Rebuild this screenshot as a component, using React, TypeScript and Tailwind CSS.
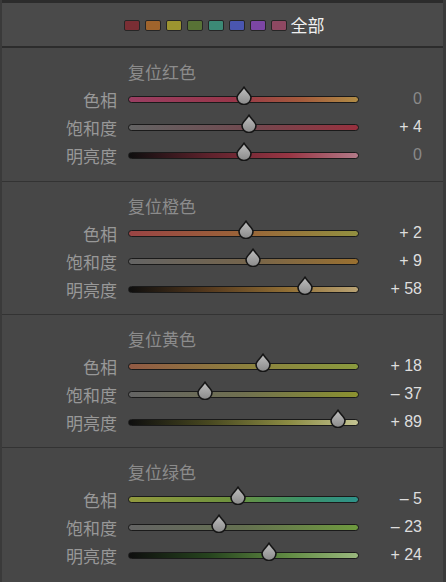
import React from "react";

type Row = { label: string; grad: string; pos: number; value: string; zero?: boolean };
type Section = { title: string; rows: Row[] };

const sections: Section[] = [
  {
    title: "复位红色",
    rows: [
      { label: "色相", grad: "linear-gradient(90deg,#9a3e62 0%,#98364a 45%,#a45a3c 75%,#b08c46 100%)", pos: 115, value: "0", zero: true },
      { label: "饱和度", grad: "linear-gradient(90deg,#646464 0%,#704a50 50%,#98303e 100%)", pos: 120, value: "+ 4" },
      { label: "明亮度", grad: "linear-gradient(90deg,#0e0e0e 0%,#5e222c 35%,#983644 70%,#b27a88 100%)", pos: 115, value: "0", zero: true },
    ],
  },
  {
    title: "复位橙色",
    rows: [
      { label: "色相", grad: "linear-gradient(90deg,#9a4444 0%,#9a6438 50%,#929040 100%)", pos: 117, value: "+ 2" },
      { label: "饱和度", grad: "linear-gradient(90deg,#646464 0%,#74644c 50%,#9a7030 100%)", pos: 124, value: "+ 9" },
      { label: "明亮度", grad: "linear-gradient(90deg,#0e0e0e 0%,#563a1e 35%,#927036 70%,#b8a274 100%)", pos: 176, value: "+ 58" },
    ],
  },
  {
    title: "复位黄色",
    rows: [
      { label: "色相", grad: "linear-gradient(90deg,#925a44 0%,#8c803e 50%,#8a9a3e 100%)", pos: 134, value: "+ 18" },
      { label: "饱和度", grad: "linear-gradient(90deg,#646464 0%,#707050 50%,#8c9230 100%)", pos: 76, value: "– 37" },
      { label: "明亮度", grad: "linear-gradient(90deg,#0e0e0e 0%,#484820 35%,#8c8c44 70%,#c4c492 100%)", pos: 209, value: "+ 89" },
    ],
  },
  {
    title: "复位绿色",
    rows: [
      { label: "色相", grad: "linear-gradient(90deg,#929a3e 0%,#6e923e 45%,#3c9268 75%,#2e928a 100%)", pos: 109, value: "– 5" },
      { label: "饱和度", grad: "linear-gradient(90deg,#646464 0%,#647050 50%,#6e9a3e 100%)", pos: 90, value: "– 23" },
      { label: "明亮度", grad: "linear-gradient(90deg,#0e0e0e 0%,#26441e 35%,#628c44 70%,#9ab87e 100%)", pos: 140, value: "+ 24" },
    ],
  },
];

const swatches = ["#7a2e34", "#a0642c", "#9c9430", "#587236", "#3c8a76", "#4a56b0", "#7c46a4", "#8e4862"];

function Thumb() {
  return (
    <svg width="16" height="19" viewBox="0 0 16 19">
      <defs>
        <linearGradient id="tg" x1="0" y1="0" x2="0" y2="1">
          <stop offset="0" stopColor="#c0c0c0" />
          <stop offset="1" stopColor="#8a8a8a" />
        </linearGradient>
      </defs>
      <path
        d="M8 1 C9.5 4.5 15 8 15 11.5 A7 7 0 0 1 1 11.5 C1 8 6.5 4.5 8 1 Z"
        fill="url(#tg)"
        stroke="#151515"
        strokeWidth="1.6"
        strokeLinejoin="round"
      />
    </svg>
  );
}

function SliderRow({ row }: { row: Row }) {
  return (
    <div className="flex h-[28px] items-center">
      <div className="w-[115px] text-right font-['Noto_Sans_CJK_SC',sans-serif] text-[17px] leading-none text-[#989898]">
        {row.label}
      </div>
      <div
        className="relative ml-[11px] h-[7px] w-[231px] rounded-full border border-[#1a1a1a]"
        style={{ background: row.grad }}
      >
        <div className="absolute top-[-11px]" style={{ left: row.pos - 8 }}>
          <Thumb />
        </div>
      </div>
      <div
        className={`w-[63px] text-right font-['Liberation_Sans',Arial,sans-serif] text-[16px] leading-none ${
          row.zero ? "text-[#8a8a8a]" : "text-[#dedede]"
        }`}
      >
        {row.value}
      </div>
    </div>
  );
}

export default function App() {
  return (
    <div className="h-[582px] w-[446px] overflow-hidden border-l-2 border-r-[3px] border-[#3a3a3a] bg-[#474747]">
      <div className="flex h-[48px] items-center justify-center border-b-2 border-t-[3px] border-[#2c2c2c] bg-[#4a4a4a] pl-[3px]">
        <div className="flex items-center gap-[5px] pt-[1px]">
          {swatches.map((c) => (
            <div key={c} className="h-[11px] w-[16px] rounded-[2px] border border-[#262626]" style={{ background: c }} />
          ))}
        </div>
        <div className="ml-[4px] font-['Noto_Sans_CJK_SC',sans-serif] text-[17px] leading-none text-[#f0f0f0]">全部</div>
      </div>
      {sections.map((s, i) => (
        <div key={s.title} className={`h-[133px] pt-[11px] ${i > 0 ? "border-t border-[#333333]" : ""}`}>
          <div className="flex h-[24px] items-center pl-[126px] font-['Noto_Sans_CJK_SC',sans-serif] text-[17px] leading-none text-[#8c8c8c]">
            {s.title}
          </div>
          <div className="mt-[2px] flex flex-col">
            {s.rows.map((r) => (
              <SliderRow key={r.label} row={r} />
            ))}
          </div>
        </div>
      ))}
    </div>
  );
}
